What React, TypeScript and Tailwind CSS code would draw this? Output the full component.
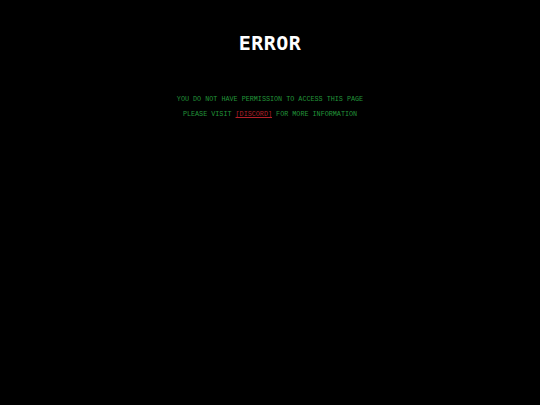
export default function App() {
	return (
		<div className="min-h-screen w-full bg-black flex flex-col items-center">
			<h1 className="mt-[31px] text-[20px] leading-[24px] font-bold text-white tracking-[0.5px] font-['DejaVu_Sans_Mono',monospace]">
				ERROR
			</h1>
			<div className="mt-[40px] flex flex-col items-center gap-[6px] text-[6.75px] leading-[9px] text-[#22953a] font-['Liberation_Mono',monospace]">
				<p>YOU DO NOT HAVE PERMISSION TO ACCESS THIS PAGE</p>
				<p>
					PLEASE VISIT <a className="text-[#b3202a] underline">[DISCORD]</a> FOR MORE INFORMATION
				</p>
			</div>
		</div>
	);
}
